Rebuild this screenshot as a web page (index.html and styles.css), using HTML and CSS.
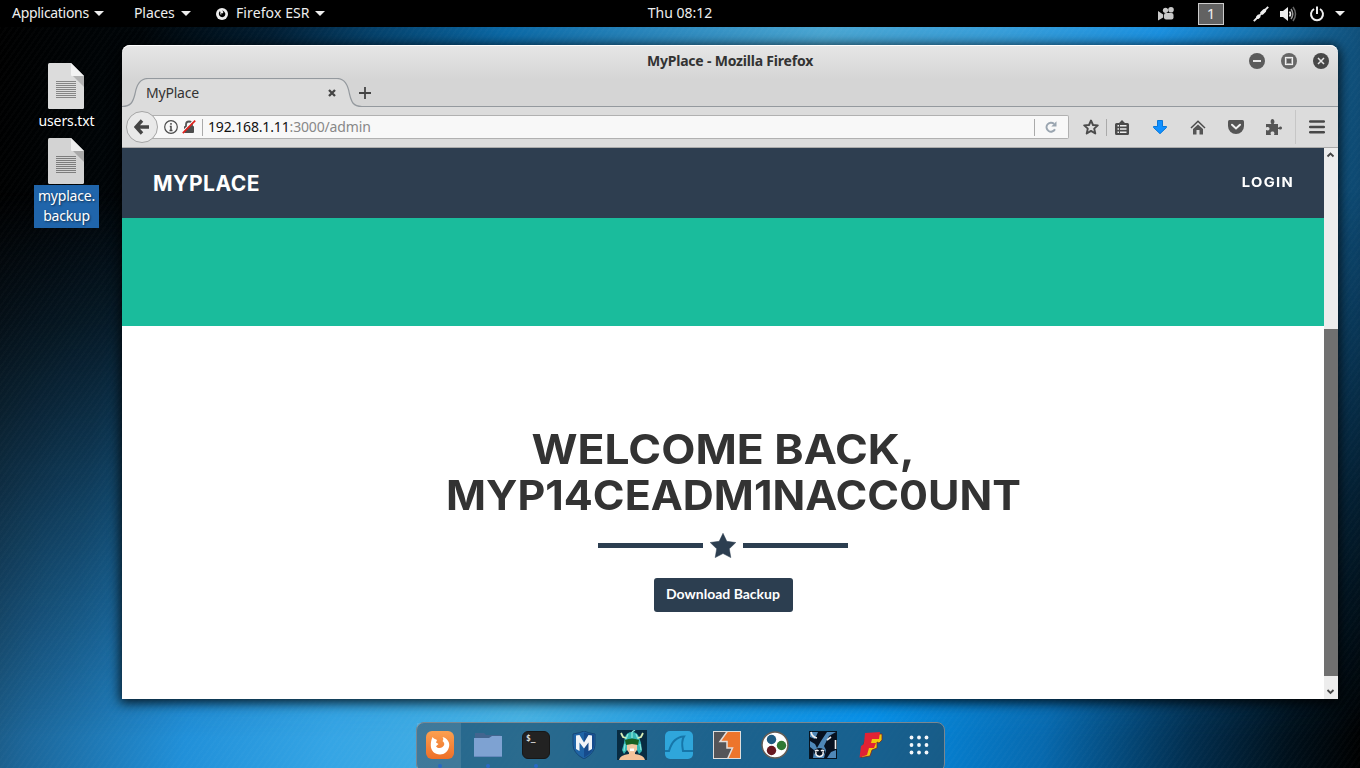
FILE: index.html
```html
<!DOCTYPE html>
<html lang="en">
<head>
<meta charset="utf-8">
<title>MyPlace - Mozilla Firefox</title>
<link rel="stylesheet" href="styles.css">
</head>
<body>
<div class="desktop">
  <div class="wall-low"></div>
  <div class="wall-lines"></div>

  <header class="panel">
    <div class="panel-left">
      <span class="menu m-apps">Applications</span><i class="caret"></i>
      <span class="menu m-places">Places</span><i class="caret"></i>
      <svg class="ff-mini" width="12" height="12" viewBox="0 0 12 12"><circle cx="6" cy="6" r="6" fill="#eee"/><path d="M3 1.6C4 3 4 3.6 3 4.6 2.3 7 4 9.200 6.300 9.200 8.500 9.200 9.600 7.500 9.300 5.600 8.900 4 7.500 2.800 6 2.600 7.500 3.800 7.600 4.700 6.800 5.200L4.800 5.500 5.500 7C4.400 6.800 3.900 5.600 4.500 4.300Z" fill="#000"/></svg>
      <span class="menu m-firefox">Firefox ESR</span><i class="caret"></i>
    </div>
    <div class="clock">Thu 08:12</div>
    <div class="panel-right">
      <svg class="cam" width="17" height="14" viewBox="0 0 17 14" fill="#c9c9c9"><circle cx="7.500" cy="3.300" r="2.600"/><circle cx="13" cy="2.800" r="2.800"/><rect x="6" y="6" width="9.500" height="6.500" rx="2"/><path d="M0 4 5.200 7.500V10.500L0 13.500Z"/></svg>
      <div class="workspace">1</div>
      <svg class="plug" width="16" height="16" viewBox="0 0 16 16"><path d="M.8 15.200 15.200.8" stroke="#eee" stroke-width="1.900"/><path d="M3.300 10.300 5.300 8.300 7.800 10.800 5.800 12.800Q4.300 13.300 3.300 12.600 2.700 11.500 3.300 10.300ZM7 6.500 10.300 3.200Q12 2.500 13 3.200 13.600 4.300 12.900 5.800L9.600 9.100Z" fill="#eee"/></svg>
      <svg class="volume" width="17" height="16" viewBox="0 0 17 16" fill="none"><path d="M0 5H3L8 1V15L3 11H0Z" fill="#eee"/><path d="M9.500 5.500Q11.500 8 9.500 10.500" stroke="#eee" stroke-width="1.600"/><path d="M11 3Q14.500 8 11 13" stroke="#999" stroke-width="1.500"/><path d="M13 1Q18 8 13 15" stroke="#666" stroke-width="1.500"/></svg>
      <svg class="power" width="16" height="16" viewBox="0 0 16 16" fill="none" stroke="#eee" stroke-width="2"><path d="M5 3A6 6 0 1 0 11 3M8 .5V8"/></svg>
      <i class="caret last"></i>
    </div>
  </header>

  <aside class="files">
    <div class="file">
      <svg width="36" height="46" viewBox="0 0 36 46"><path d="M1.500 0H23L36 13V44.500Q36 46 34.500 46H1.500Q0 46 0 44.500V1.500Q0 0 1.500 0Z" fill="#dcdcdc"/><path d="M23 0 36 13H24Q23 13 23 12Z" fill="#f3f3f3"/><path d="M25 13H36V24Z" fill="#b3b3b3"/><path d="M8 18.500H28M8 20.500H28M8 22.500H28M8 24.500H28M8 26.500H28M8 28.500H28M8 30.500H28M8 32.500H28M8 34.500H28" stroke="#858585"/></svg>
      <div class="label">users.txt</div>
    </div>
    <div class="file selected">
      <svg width="36" height="46" viewBox="0 0 36 46"><path d="M1.500 0H23L36 13V44.500Q36 46 34.500 46H1.500Q0 46 0 44.500V1.500Q0 0 1.500 0Z" fill="#d3d3d3"/><path d="M23 0 36 13H24Q23 13 23 12Z" fill="#eee"/><path d="M25 13H36V24Z" fill="#a9a9a9"/><path d="M8 18.500H28M8 20.500H28M8 22.500H28M8 24.500H28M8 26.500H28M8 28.500H28M8 30.500H28M8 32.500H28M8 34.500H28" stroke="#7d7d7d"/></svg>
      <div class="label">myplace.<br>backup</div>
    </div>
  </aside>

  <main class="window">
    <div class="titlebar">
      <span class="title">MyPlace - Mozilla Firefox</span>
      <div class="controls">
        <svg width="16" height="16" viewBox="0 0 16 16"><circle cx="8" cy="8" r="8" fill="#5b5b5b"/><path d="M4 8H12" stroke="#e6e6e6" stroke-width="2"/></svg>
        <svg width="16" height="16" viewBox="0 0 16 16"><circle cx="8" cy="8" r="8" fill="#666"/><rect x="4.500" y="4.500" width="7" height="7" fill="#999" stroke="#eee" stroke-width="1.200"/><rect x="6" y="6" width="4" height="4" fill="#5b5b5b"/></svg>
        <svg width="16" height="16" viewBox="0 0 16 16"><circle cx="8" cy="8" r="8" fill="#484848"/><path d="M5 5 11 11M11 5 5 11" stroke="#e6e6e6" stroke-width="1.500"/></svg>
      </div>
    </div>
    <div class="tabs">
      <svg class="tab-shape" width="1216" height="30" viewBox="0 0 1216 30"><path d="M0 30V29.500C9 29.500 11 24 13 16 14.500 7 18 1.500 26 1.500H215C223 1.500 226 7 227.500 16 229.500 24 231 29.500 240 29.500H1216V30Z" fill="#dcdcdc"/><path d="M0 28.500C9 28.500 11 24 13 16 14.500 7 18 .5 26 .5H215C223 .5 226 7 227.500 16 229.500 24 231 28.500 240 28.500H1216" fill="none" stroke="#94999e" stroke-width="1.200"/></svg>
      <span class="tab-name">MyPlace</span>
      <svg class="tab-close" width="8" height="8" viewBox="0 0 8 8"><path d="M1 1 7 7M7 1 1 7" stroke="#444" stroke-width="2.300"/></svg>
      <svg class="tab-new" width="12" height="12" viewBox="0 0 12 12"><path d="M6 0V12M0 6H12" stroke="#444" stroke-width="1.800"/></svg>
    </div>
    <div class="toolbar">
      <div class="back"><svg width="16" height="16" viewBox="0 0 16 16"><path d="M8 1.500 2 8 8 14.500M3 8H15" fill="none" stroke="#444" stroke-width="3.400"/></svg></div>
      <div class="urlbar">
        <svg class="info" width="14" height="14" viewBox="0 0 14 14"><circle cx="7" cy="7" r="6.300" fill="none" stroke="#4a4a4a" stroke-width="1.200"/><path d="M7 3V4.800M5.800 6.500H7V10.500M5.500 10.500H8.500" fill="none" stroke="#4a4a4a" stroke-width="1.500"/></svg>
        <svg class="lock" width="14" height="14" viewBox="0 0 14 14"><path d="M4 7V4.500A3 3 0 0 1 10 4.500V7" fill="none" stroke="#555" stroke-width="1.800"/><rect x="2" y="6" width="10" height="7" rx="1" fill="#4d4d4d"/><path d="M.3 12 11.800.3" stroke="#f8f8f8" stroke-width="1.500"/><path d="M.8 13.200 13.200.6" stroke="#e0201b" stroke-width="1.700"/></svg>
        <i class="vline"></i>
        <span class="url">192.168.1.11<span>:3000/admin</span></span>
        <i class="vline end"></i>
        <svg class="reload" width="12" height="12" viewBox="0 0 12 12"><path d="M10 8.300A4.500 4.500 0 1 1 9 2.800" fill="none" stroke="#9aa5b0" stroke-width="1.900"/><path d="M11.500.3V5.500H6.300Z" fill="#9aa5b0"/></svg>
      </div>
      <svg class="star-icon" width="16" height="16" viewBox="0 0 16 16"><path d="M8 1.500 10 6 14.800 6.400 11.200 9.600 12.300 14.500 8 11.900 3.700 14.500 4.800 9.600 1.200 6.400 6 6Z" fill="none" stroke="#4b4b4b" stroke-width="1.900" stroke-linejoin="round"/></svg>
      <i class="vline split"></i>
      <svg class="clip" width="14" height="15" viewBox="0 0 14 15"><path d="M1.500 3H4L7 0 10 3H12.500Q14 3 14 4.500V13.500Q14 15 12.500 15H1.500Q0 15 0 13.500V4.500Q0 3 1.500 3Z" fill="#4b4b4b"/><path d="M2.500 5.800H4M5 5.800H11.500M2.500 9H4M5 9H11.500M2.500 12.200H4M5 12.200H11.500" stroke="#eee" stroke-width="1.500"/></svg>
      <svg class="down" width="14" height="14" viewBox="0 0 14 14"><path d="M4.500.5H9.500V6.500H13.500V7.500L7 13.700.5 7.500V6.500H4.500Z" fill="#1190ff" stroke="#0877d8"/></svg>
      <svg class="home" width="16" height="15" viewBox="0 0 16 15"><path d="M1 8 8 1.300 15 8" fill="none" stroke="#4b4b4b" stroke-width="1.500"/><path d="M3 9 8 4.500 13 9V14.500H9.500V10H6.500V14.500H3Z" fill="#555"/></svg>
      <svg class="pocket" width="16" height="14" viewBox="0 0 16 14"><path d="M1.500 0H14.500Q16 0 16 1.500V6A8 8 0 0 1 0 6V1.500Q0 0 1.500 0Z" fill="#555"/><path d="M4 4.800 8 8.500 12 4.800" fill="none" stroke="#eee" stroke-width="2" stroke-linecap="round"/></svg>
      <svg class="puzzle" width="16" height="16" viewBox="0 0 16 16"><path d="M0 5H5.500C4 3.500 4.500 0 6.500 0S9 3.500 7.800 4.500V5H12V8.500H13C13.500 7 16 7.200 16 9S13.500 11 13 10H12V16H8C9 13.500 8 12.500 6.500 12.500S4 13.500 5 16H0V11C2.500 12 3.500 11 3.500 9.800S2.500 7.500 0 8.500Z" fill="#555"/></svg>
      <i class="vline tall"></i>
      <svg class="burger" width="16" height="14" viewBox="0 0 16 14"><path d="M1.200 1.500H14.800M1.200 7H14.800M1.200 12.300H14.800" stroke="#484848" stroke-width="2.500" stroke-linecap="round"/></svg>
    </div>
    <div class="viewport">
      <div class="page">
        <nav class="site-nav"><span class="brand">MYPLACE</span><span class="login">LOGIN</span></nav>
        <div class="banner"></div>
        <section class="welcome">
          <h2><span class="line1">WELCOME BACK,</span><span class="line2">MYP14CEADM1NACC0UNT</span></h2>
          <div class="divider"><i></i><svg width="26" height="25" viewBox="0 0 26 25"><path d="M13 .3 16.800 8.300 25.800 9.500 19.300 15.800 20.800 24.600 13 20.500 5.200 24.600 6.700 15.800.2 9.500 9.200 8.300Z" fill="#2c3e50" stroke="#2c3e50" stroke-width=".5" stroke-linejoin="round"/></svg><i></i></div>
          <div class="button"><span>Download Backup</span></div>
        </section>
      </div>
      <div class="scrollbar">
        <svg width="14" height="14" viewBox="0 0 14 14"><path d="M3.500 8.500 6.500 5.500 9.500 8.500" fill="none" stroke="#444" stroke-width="1.800"/></svg>
        <div class="thumb"></div>
        <svg width="14" height="14" viewBox="0 0 14 14"><path d="M3.500 5 6.500 8 9.500 5" fill="none" stroke="#444" stroke-width="1.800"/></svg>
      </div>
    </div>
  </main>

  <footer class="dock">
    <div class="app active running"><svg width="28" height="28" viewBox="0 0 28 28"><defs><linearGradient id="og" x2="0" y2="1"><stop stop-color="#fba050"/><stop offset="1" stop-color="#ee6f28"/></linearGradient></defs><rect width="28" height="28" rx="6" fill="url(#og)"/><path d="M6.500 6C7.500 8 9 7.500 11 9L10 11.500 12.500 13 10 15.200C11.500 17.500 14.500 17.500 16.500 16 18.500 14.500 18.800 12.500 17.500 11L16.500 10C17.800 8.800 17.300 7.500 16.500 6 21 7 23.800 11 23.200 15 22.500 20 18.500 23.500 14 23.500 8.500 23.500 4.800 19.500 4.800 14.500 4.800 11.500 5.200 9 6.500 6Z" fill="#fff"/></svg></div>
    <div class="app running"><svg width="28" height="28" viewBox="0 0 28 28"><path d="M1 2H10L12 4H26.500V9H1Z" fill="#42658f"/><path d="M0 7H15L18 5H28V26H0Z" fill="#7ea2d2"/><path d="M0 25.500H28" stroke="#6489bd"/></svg></div>
    <div class="app running"><svg width="28" height="28" viewBox="0 0 28 28"><rect x=".5" y=".5" width="27" height="27" rx="5.500" fill="#222" stroke="#171717"/><text x="4" y="10" class="prompt">$_</text></svg></div>
    <div class="app"><svg width="28" height="28" viewBox="0 0 28 28"><path d="M3 3Q10 2 14 0 18 2 25 3V14Q25 22 14 28 3 22 3 14Z" fill="#1f64a6" stroke="#174777"/><path d="M14 1.500Q19 3 24 3.500V14Q24 21 14 26.500Z" fill="#164b8c"/><path d="M6 4.500 9.500 4 14 11.500 18.500 4 22 4.500V18L18.500 20V11.500L14 17.500 9.500 11.500V20L6 18Z" fill="#f1f4f8"/></svg></div>
    <div class="app"><svg width="30" height="30" viewBox="0 0 30 30"><rect width="30" height="30" fill="#082c42"/><path d="M8 7Q10 2 15 2 20 2 22 7L24 13 25 21 22 24 20 20H10L7 24 5 20 7 13Z" fill="#35b8b5"/><path d="M11 4 9 9M15 2V8M19 4 21 9M8 14 7 21M23 14 24 20M15 2 18 0" fill="none" stroke="#88e5da" stroke-width="1.300"/><path d="M10 13H20V20L17 24H13L10 20Z" fill="#f0c9a4"/><path d="M8 10Q15 7 22 10L21 15 15 14 9 15Z" fill="#176123"/><path d="M2 30Q3 25 12 24V22H18V24Q27 25 28 30Z" fill="#f4c29a"/><path d="M13 18.500H17V21H13Z" fill="#fff"/><path d="M4 3 6 7 9 8M26 3 24 7 21 8" fill="none" stroke="#d8efb8" stroke-width="1.800"/></svg></div>
    <div class="app"><svg width="28" height="28" viewBox="0 0 28 28"><rect width="28" height="28" rx="5" fill="#2fa6db"/><path d="M0 20H4Q8 6 19 5.500 16 10 18 20H28" fill="none" stroke="#1676a9" stroke-width="2"/></svg></div>
    <div class="app"><svg width="28" height="28" viewBox="0 0 28 28"><rect x=".5" y=".5" width="27" height="27" fill="#555559"/><path d="M14.500 0H28V28H14.500L19.500 17H14V10.500H7Z" fill="#ed752c"/><path d="M14.500 0 7 10.500H14V17H19.500L14.500 28" fill="none" stroke="#e5dedb" stroke-width="1.500"/><rect x=".5" y=".5" width="27" height="27" fill="none" stroke="#dedede"/></svg></div>
    <div class="app"><svg width="28" height="28" viewBox="0 0 28 28"><circle cx="14" cy="14" r="13" fill="#fff" stroke="#655d55" stroke-width="1.500"/><circle cx="10.500" cy="8.500" r="4.700" fill="#1d5b82"/><circle cx="20.500" cy="14.500" r="4.700" fill="#2f7935"/><circle cx="10.500" cy="19.500" r="4.700" fill="#681820"/></svg></div>
    <div class="app"><svg width="28" height="28" viewBox="0 0 28 28"><rect x=".5" y=".5" width="27" height="27" fill="#4f88b8" stroke="#061522"/><path d="M9 1H18L12 10 8 17 6 13 1 10V6L6 8ZM20 5 27 1V19L22 21 18 27H15L17 19 15 15ZM1 16 5 19 4 27H1Z" fill="#07111f"/><path d="M2 1Q3 6 8 7M18 9 22 6M26.500 9V18" fill="none" stroke="#eee" stroke-width="1.600"/><ellipse cx="10.500" cy="21" rx="5.500" ry="4" fill="#07111f"/><path d="M7 20.500Q6 25 10.500 25.500 15 25 14 20.500M6 20Q8 18.500 9.500 20M12 20Q13.500 18.500 15 20" fill="none" stroke="#f2f2f2" stroke-width="1.500"/></svg></div>
    <div class="app"><svg width="28" height="28" viewBox="0 0 28 28"><path d="M10 3 25 3V9L22 12 20 11 20 17 15 19 13 25 4 26.500 6 15Z" fill="#efc80d" stroke="#79252b" stroke-width=".8"/><path d="M8 2 23 1 22 8 15 8 14 12 19 12 17 17 12 17 10 24 2.500 26.500 4 15 7 13Z" fill="#e22234"/></svg></div>
    <div class="app"><svg width="20" height="20" viewBox="0 0 20 20" fill="#f4f7fa"><circle cx="2.500" cy="2.500" r="1.900"/><circle cx="10" cy="2.500" r="1.900"/><circle cx="17.500" cy="2.500" r="1.900"/><circle cx="2.500" cy="10" r="1.900"/><circle cx="10" cy="10" r="1.900"/><circle cx="17.500" cy="10" r="1.900"/><circle cx="2.500" cy="17.500" r="1.900"/><circle cx="10" cy="17.500" r="1.900"/><circle cx="17.500" cy="17.500" r="1.900"/></svg></div>
  </footer>
</div>
</body>
</html>
```
FILE: styles.css
```css
* { box-sizing: border-box; }
body { margin: 0; font-family: "Noto Sans", "Open Sans", sans-serif; font-size: 14px; }
svg { display: block; flex: none; }

.desktop {
  position: relative; width: 1360px; height: 768px; overflow: hidden;
  background: linear-gradient(97deg, #000 0, #000508 10%, #021e33 19%, #05426c 26%, #0b69a6 35%, #2a86bc 45%, #4aa6d2 57%, #389ed9 69%, #1b90df 80%, #176ba0 89%, #0c4268 96%, #06304c 100%);
}
.wall-low {
  position: absolute; inset: 0;
  background: linear-gradient(97deg, #18415c 0, #1c6699 8%, #2190d9 19%, #35a5e5 29%, #48b2e2 42%, #1b96df 55%, #058ee6 66%, #0769ae 78%, #022f50 88%, #00101b 95%, #000 100%);
  -webkit-mask-image: linear-gradient(94deg, #0000 0, #0000 50%, #000 90%), linear-gradient(#0000 25%, #0003 45%, #0009 70%, #000 96%);
  mask-image: linear-gradient(#0000 25%, #0003 42%, #0009 68%, #000 96%);
}
.wall-lines { position: absolute; inset: 0; background: repeating-linear-gradient(125deg, #ffffff04 0 2px, #0000 2px 5px); }

/* top panel */
.panel { position: relative; display: flex; align-items: center; justify-content: space-between; height: 27px; background: #000; color: #eee; }
.panel-left, .panel-right { display: flex; align-items: center; width: 600px; height: 26px; }
.panel-left { padding-left: 12px; }
.menu { height: 26px; line-height: 24px; white-space: nowrap; }
.m-apps { width: 82px; letter-spacing: -.3px; }
.m-places { width: 47px; margin-left: 30px; letter-spacing: -.1px; }
.m-firefox { width: 79px; margin-left: 8px; letter-spacing: .1px; }
.ff-mini { margin-left: 25px; }
.caret { flex: none; width: 10px; height: 5px; background: #eee; clip-path: polygon(0 0, 100% 0, 50% 100%); }
.clock { width: 80px; height: 26px; line-height: 24px; text-align: center; white-space: nowrap; }
.panel-right { justify-content: flex-end; padding-right: 15px; }
.workspace { width: 26px; height: 22px; margin: 0 29px 0 23px; border: 1px solid #ccc; background: #626262; text-align: center; line-height: 19px; font-size: 15px; }
.volume { margin: 0 12px 0 11px; }
.last { margin-left: 10px; }

/* desktop files */
.files { position: absolute; left: 34px; top: 63px; width: 65px; display: flex; flex-direction: column; gap: 7px; color: #fff; text-align: center; }
.file svg { margin: 0 0 0 14px; }
.label { line-height: 20px; padding-top: 2px; letter-spacing: -.1px; text-shadow: 1px 1px 2px #000; white-space: nowrap; }
.selected .label { margin-top: 1px; height: 43px; padding-top: 1px; background: #2065ab; letter-spacing: -.2px; text-shadow: 1px 1px 2px #0008; }

/* browser window */
.window { position: absolute; left: 122px; top: 45px; width: 1216px; height: 654px; display: flex; flex-direction: column; border-radius: 8px 8px 0 0; background: linear-gradient(#e6e6e6, #d5d5d5 35px); box-shadow: inset 0 1px #fff, 0 2px 12px 2px #000c; overflow: hidden; }
.titlebar { display: flex; align-items: center; height: 32px; padding-left: 508px; }
.title { flex: none; width: 200px; padding-bottom: 2px; text-align: center; font-weight: 700; color: #333; letter-spacing: -.2px; white-space: nowrap; }
.controls { display: flex; gap: 16px; margin-left: auto; padding-right: 9px; }
.tabs { position: relative; display: flex; align-items: center; height: 30px; padding-left: 24px; color: #333; }
.tab-shape { position: absolute; left: 0; top: 1px; }
.tab-name, .tab-close, .tab-new { position: relative; }
.tab-name { width: 182px; padding-top: 1px; letter-spacing: -.2px; }
.tab-close, .tab-new { margin-top: 2px; }
.tab-new { margin-left: 23px; }
.toolbar { display: flex; align-items: center; height: 41px; border-bottom: 1px solid #aaa; background: #dcdcdc; }
.back { z-index: 1; display: flex; align-items: center; justify-content: center; flex: none; width: 32px; height: 32px; margin-left: 4px; border: 1px solid #a5a5a5; border-radius: 50%; background: #e9e9e9; }
.urlbar { display: flex; align-items: center; flex: none; width: 918px; height: 24px; margin-left: -7px; padding-left: 13px; border: 1px solid #b1b1b1; border-left: 0; border-radius: 0 2px 2px 0; background: #f8f8f8; }
.lock { margin: 0 6px 0 4px; }
.vline { flex: none; width: 1px; height: 17px; background: #aaa; }
.url { margin-left: 5px; padding-bottom: 2px; color: #111; white-space: nowrap; letter-spacing: -.15px; }
.url span { color: #888; }
.end { margin-left: auto; }
.reload { margin: 0 11px 0 10px; }
.star-icon { margin-left: 14px; }
.split { margin: 0 8px 0 7px; }
.down { margin-left: 24px; }
.home { margin-left: 23px; }
.pocket { margin-left: 22px; }
.puzzle { margin-left: 22px; }
.tall { height: 34px; margin: 0 13px 0 13px; background: #c6c6c6; }

/* web page */
.viewport { display: flex; flex: 1; background: #fff; }
.page { width: 1202px; }
.site-nav { display: flex; align-items: center; justify-content: space-between; height: 70px; padding: 0 30px 0 31px; background: #2e3e50; color: #fff; font-family: Inter, sans-serif; font-weight: 700; }
.brand { font-size: 21px; letter-spacing: .5px; }
.login { font-size: 13.5px; letter-spacing: 1.25px; transform: scaleX(1.09); transform-origin: right; padding-bottom: 2px; }
.banner { height: 108px; background: #1abc9c; }
.welcome { display: flex; flex-direction: column; align-items: center; padding-top: 100px; }
h2 { width: 554px; margin: 0; color: #333; font: 700 41px/46px Inter, sans-serif; white-space: nowrap; }
h2 span { display: block; }
.line1 { text-align: center; transform: scaleX(1.083); }
.line2 { transform: scaleX(1.048); transform-origin: left; }
.divider { display: flex; align-items: center; gap: 7px; margin-top: 15px; }
.divider i { width: 105px; height: 5px; background: #2c3e50; }
.button { display: flex; align-items: flex-start; justify-content: center; width: 139px; height: 34px; margin-top: 20px; border-radius: 3px; background: #2c3e50; color: #fff; font: 700 14px/32px Lato, sans-serif; }
.scrollbar { display: flex; flex-direction: column; justify-content: space-between; width: 14px; background: #ededed; }
.scrollbar svg:last-child { margin-top: 9px; }
.thumb { height: 347px; margin-top: 167px; background: #707070; }

/* dock */
.dock { position: absolute; left: 416px; top: 722px; width: 529px; height: 50px; display: flex; align-items: flex-start; border: 1px solid #7b8790; border-radius: 8px; background: #1e4f6eb8; }
.app { position: relative; display: flex; align-items: center; justify-content: center; width: 48px; height: 45px; padding: 0 2px 2px 0; }
.app.active { background: linear-gradient(#ffffff1c, #ffffff1c) 0 0 / 44px 45px no-repeat; }
.running::after { content: ""; position: absolute; left: 21px; bottom: 0; width: 4px; height: 4px; border-radius: 50%; background: #2869c4; }
.prompt { font: 700 8px "DejaVu Sans Mono", monospace; fill: #ddd; }
```
